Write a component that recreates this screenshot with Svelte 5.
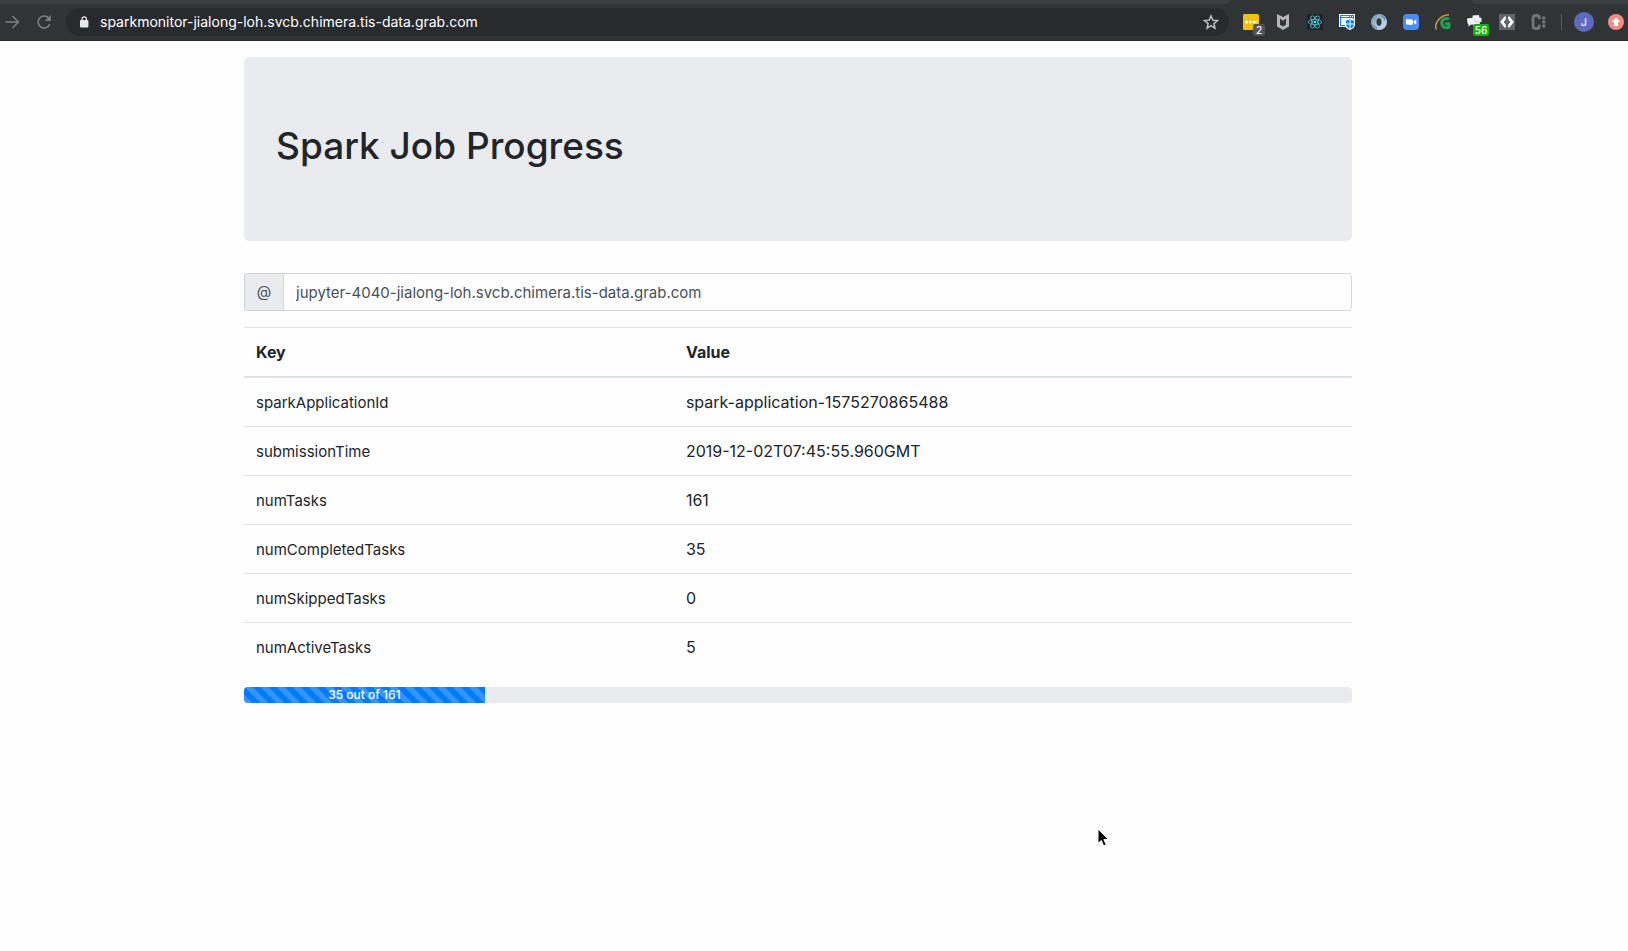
<script>
  let address = $state('sparkmonitor-jialong-loh.svcb.chimera.tis-data.grab.com');
  let host = $state('jupyter-4040-jialong-loh.svcb.chimera.tis-data.grab.com');
  const total = 161;
  const completed = 35;
  const rows = [
    ['sparkApplicationId', 'spark-application-1575270865488'],
    ['submissionTime', '2019-12-02T07:45:55.960GMT'],
    ['numTasks', total],
    ['numCompletedTasks', completed],
    ['numSkippedTasks', 0],
    ['numActiveTasks', 5]
  ];
  const percent = (completed / total) * 100;
</script>

<header class="browser">
  <div class="tabs"><span class="tab-left"></span><span class="tab-right"></span></div>
  <div class="toolbar">
    <nav>
      <button aria-label="Forward">
        <svg width="16" height="16" viewBox="0 0 16 16" fill="none" stroke="#7d8083" stroke-width="1.5"><path d="M1.500 8h12.500M8.500 2l6 6-6 6" /></svg>
      </button>
      <button aria-label="Reload">
        <svg width="16" height="16" viewBox="0 0 16 16" fill="none" stroke="#7d8083" stroke-width="1.6"><path d="M13.8 10A6 6 0 1 1 12.6 4" /><path d="M14.800 1v6H8.800z" fill="#7d8083" stroke="none" /></svg>
      </button>
    </nav>
    <div class="omnibox">
      <svg width="10" height="12" viewBox="0 0 10 12"><rect x="0" y="4" width="8.400" height="7.6" rx="1" fill="#e8eaed" /><path d="M2 4.500V3a2.200 2.200 0 0 1 4.400 0v1.500" fill="none" stroke="#e8eaed" stroke-width="1.200" /></svg>
      <input class="address" aria-label="Address" bind:value={address} />
      <button aria-label="Bookmark">
        <svg width="16" height="16" viewBox="0 0 16 16" fill="none" stroke="#c3c5c8" stroke-width="1.400"><path d="M8 1.800l1.800 4.300 4.700.4-3.600 3.100 1.100 4.600L8 11.700l-4 2.500 1.100-4.600L1.500 6.500l4.700-.4z" /></svg>
      </button>
    </div>
    <div class="extensions">
      <button aria-label="Passwords">
        <svg width="16" height="16" viewBox="0 0 16 16"><rect width="16" height="16" rx="1.500" fill="#f0c010" /><g fill="#fff"><circle cx="3.600" cy="8" r="1.500" /><circle cx="7.400" cy="8" r="1.500" /><circle cx="11.200" cy="8" r="1.500" /><path d="M13.500 6h1v3.500h-1z" opacity=".5" /></g></svg>
        <span class="badge gray">2</span>
      </button>
      <button aria-label="Shield">
        <svg width="16" height="16" viewBox="0 0 16 16"><path d="M2 0l6 3 6-3v12.500L8 16l-6-3.500zM5 4.500v6.200L8 12.500l3-1.800V4.500L8 6.800z" fill="#b4b5b6" fill-rule="evenodd" /></svg>
      </button>
      <button aria-label="Component tools">
        <svg width="16" height="16" viewBox="0 0 16 16"><rect width="16" height="16" rx="1" fill="#202224" /><g fill="none" stroke="#53b5d3" stroke-width=".9"><ellipse cx="8" cy="8" rx="6.800" ry="2.600" /><ellipse cx="8" cy="8" rx="6.800" ry="2.600" transform="rotate(60 8 8)" /><ellipse cx="8" cy="8" rx="6.800" ry="2.600" transform="rotate(120 8 8)" /></g><circle cx="8" cy="8" r="1.300" fill="#61dafb" /></svg>
      </button>
      <button aria-label="Browser protection">
        <svg width="16" height="16" viewBox="0 0 16 16"><path d="M0 0h16v10c0 3-2 5-5 6-2-.6-3.500-1.500-4.300-3H0z" fill="#fff" /><path d="M1 1h14v4h-1.200V4H2.200v7H6v1.200H1z" fill="#1683d8" /><path d="M2 2h8v1H2zM11 2h1v1h-1zM13 2h1v1h-1z" fill="#fff" /><path d="M11 5.300c1.300.9 2.500 1.100 4 1.200v3.300c0 2.600-1.600 4.300-4 5.200-2.400-.9-4-2.600-4-5.200V6.500c1.500-.1 2.700-.3 4-1.200z" fill="#1683d8" /><path d="M11 6v9M7 10h8" stroke="#fff" stroke-width="1" /></svg>
      </button>
      <button aria-label="Ring">
        <svg width="16" height="16" viewBox="0 0 16 16"><defs><linearGradient id="ring" x1="0" y1="0" x2="1" y2="1"><stop offset="0" stop-color="#6f8fb5" /><stop offset=".5" stop-color="#a9bfd8" /><stop offset="1" stop-color="#d3dfec" /></linearGradient></defs><path d="M8 0a8 8 0 1 0 0 16A8 8 0 0 0 8 0zM8 4.200c1.600 0 2.500 1.600 2.500 3.800s-.9 3.800-2.500 3.800S5.500 10.200 5.500 8 6.400 4.200 8 4.200z" fill="url(#ring)" fill-rule="evenodd" /><path d="M1.800 10.500A6.500 6.500 0 0 0 6 14.300M10 1.800a6.500 6.500 0 0 1 4.300 4.500" fill="none" stroke="#7192b8" stroke-width="1.500" /></svg>
      </button>
      <button aria-label="Video call">
        <svg width="16" height="16" viewBox="0 0 16 16"><rect width="16" height="16" rx="4" fill="#4a8cf7" /><path d="M3 5.200h5.300c1 0 1.500.6 1.500 1.500v4.100H4.500C3.500 10.800 3 10.200 3 9.300zM10.500 7.200L13.300 5.300v5.400l-2.800-1.900z" fill="#fff" /></svg>
      </button>
      <button aria-label="Green letter mark">
        <svg width="16" height="16" viewBox="0 0 16 16" fill="none"><path d="M14 5.400A4.600 4.600 0 1 0 13.900 12.900V9.800H10" stroke="#18a94d" stroke-width="3" /><path d="M1.500 15.500C-1.500 10 5 1 14 .8" stroke="#df9c35" stroke-width="1.400" /></svg>
      </button>
      <button aria-label="Messages">
        <svg width="16" height="16" viewBox="0 0 16 16" fill="#f2f3f3"><path d="M5.500 1.400L12 1l.4 2.500 2 .2.300 4-2 .2.300 3.500-4.700.6-2 2-.3-3.500-2.500.3-2 2 .1-2.400L.5 9.500 0 4.500l5.700-.8z" /><path d="M7.500 5l.3 3 4.500-.3" fill="none" stroke="#b3b5b6" stroke-width=".6" /></svg>
        <span class="badge green">56</span>
      </button>
      <button aria-label="Code">
        <svg width="16" height="16" viewBox="0 0 16 16"><rect width="16" height="16" fill="#626466" /><path d="M6.800 2.500v2.700L4.700 8l2.100 2.800v2.700H5.500L1.200 8l4.300-5.500zM9.200 2.500v2.700L11.300 8l-2.100 2.800v2.700h1.300L14.800 8l-4.300-5.500z" fill="#fff" /></svg>
      </button>
      <button aria-label="Letter and dots">
        <svg width="16" height="16" viewBox="0 0 16 16" fill="#727577"><path d="M8.300 5.200V4c0-1.800-1-2.700-3-2.700s-3.300 1-3.300 3v7.400c0 2 1.300 3 3.300 3s3-.9 3-2.700v-1.200" fill="none" stroke="#727577" stroke-width="2.800" /><circle cx="12.800" cy="4" r="1.800" /><circle cx="12.800" cy="8" r="1.800" /><circle cx="12.800" cy="12" r="1.800" /></svg>
      </button>
    </div>
    <div class="account">
      <button class="avatar">J</button>
      <button aria-label="Update">
        <svg width="16" height="16" viewBox="0 0 16 16"><circle cx="8" cy="8" r="8" fill="#f28b82" /><path d="M8 3.500L12.500 8H10v4H6V8H3.500z" fill="#fff" /></svg>
      </button>
    </div>
  </div>
</header>

<main>
  <div class="container">
    <section class="jumbotron"><h1>Spark Job Progress</h1></section>
    <div class="input-group">
      <label for="host">@</label>
      <input id="host" bind:value={host} />
    </div>
    <table>
      <thead><tr><th>Key</th><th>Value</th></tr></thead>
      <tbody>
        {#each rows as [key, value]}
          <tr><td class="key">{key}</td><td>{value}</td></tr>
        {/each}
      </tbody>
    </table>
    <div class="progress"><div class="bar" style="width: {percent}%">{completed} out of {total}</div></div>
  </div>
</main>

<svg class="cursor" width="14" height="20" viewBox="0 0 14 20"><path d="M1 1v14.500l3.300-3 2.300 5.300 2.600-1.100-2.300-5.200h4.600z" fill="#000" stroke="#fff" stroke-width="1" /></svg>

<style>
  :global(body) { margin: 0; background: #fefefe; color: #212529; font: 16px/24px Inter, sans-serif; }
  * { box-sizing: border-box; }
  button { position: relative; display: flex; border: 0; padding: 0; background: none; }
  .browser { background: #313437; border-bottom: 1px solid #27292b; }
  .tabs { display: flex; justify-content: space-between; height: 4px; }
  .tab-left { width: 75.5%; background: #3c4043; border-bottom-right-radius: 4px; }
  .tab-right { width: 9.6%; background: #3c4043; border-bottom-left-radius: 4px; }
  .toolbar { display: flex; align-items: center; height: 36px; padding: 0 4px; }
  nav { display: flex; gap: 16px; margin-right: 14px; }
  .omnibox { flex: 1; display: flex; align-items: center; gap: 10px; height: 28px; margin-right: 6px; padding: 0 10px 0 14px; border-radius: 14px; background: #282b2e; }
  .address { flex: 1; min-width: 0; border: 0; padding: 0; background: none; color: #fff; font: 14px/20px Inter, sans-serif; }
  .extensions { display: flex; gap: 16px; padding: 0 8px; }
  .badge { position: absolute; top: 10px; height: 12px; border-radius: 2px; color: #fff; font: 500 10px/12px Inter, sans-serif; text-align: center; }
  .gray { left: 10px; width: 12px; background: #505357; }
  .green { left: 6px; width: 16px; background: #0ab80a; }
  .account { display: flex; align-items: center; gap: 14px; margin-left: 6px; padding-left: 12px; border-left: 1px solid #5b5e61; height: 16px; }
  .avatar { align-items: center; justify-content: center; width: 20px; height: 20px; border-radius: 50%; background: #5c6bc0; color: #fff; font: 11px/20px Inter, sans-serif; }
  main { padding: 16px 32px 16px 0; }
  .container { max-width: 1108px; margin: 0 auto; }
  .jumbotron { margin-bottom: 32px; padding: 64px 32px; border-radius: 5px; background: #e9ebee; }
  h1 { margin: 0; padding-bottom: 6px; font-size: 37px; line-height: 50px; font-weight: 500; }
  .input-group { display: flex; height: 38px; margin-bottom: 16px; }
  label { width: 39px; text-align: center; line-height: 36px; font-size: 15px; border: 1px solid #ced4da; border-right: 0; border-radius: 4px 0 0 4px; background: #e9ebee; color: #495057; }
  #host { flex: 1; min-width: 0; padding: 7px 12px 5px; border: 1px solid #ced4da; border-radius: 0 4px 4px 0; color: #495057; background: #fefefe; font: 15px/24px Inter, sans-serif; }
  table { width: 100%; margin-bottom: 16px; border-collapse: collapse; }
  th, td { padding: 12px; border-top: 1px solid #dee2e6; text-align: left; vertical-align: baseline; }
  th { border-bottom: 2px solid #dee2e6; font-weight: 700; }
  th:first-child { width: 38.8%; }
  .key { padding: 13px 12px 11px; font-size: 15px; }
  .progress { height: 16px; border-radius: 4px; overflow: hidden; background: #e9ebee; }
  .bar {
    height: 16px; line-height: 16px; font-size: 12px; font-weight: 500; color: #fff; text-align: center;
    background: linear-gradient(45deg, rgba(255, 255, 255, .2) 25%, transparent 25%, transparent 50%, rgba(255, 255, 255, .2) 50%, rgba(255, 255, 255, .2) 75%, transparent 75%) 0 0 / 16px 16px #007bff;
  }
  .cursor { position: absolute; left: 67.4%; top: 828px; }
</style>
